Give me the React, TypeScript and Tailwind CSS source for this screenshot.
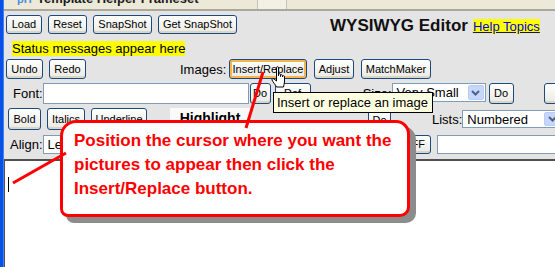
import type { ReactNode } from 'react';

// XP style push button
function XpButton({ className = '', hover = false, children }: { className?: string; hover?: boolean; children?: ReactNode }) {
  return (
    <button
      className={
        'shrink-0 whitespace-nowrap rounded-[3px] border border-[#1c4a7e] bg-linear-to-b from-white to-[#eae9e3] px-0 text-[11px] leading-none text-black ' +
        (hover ? 'shadow-[inset_0_0_0_2px_#f4b650] ' : 'shadow-[inset_0_-2px_0_#d9d5c7] ') +
        className
      }
    >
      {children}
    </button>
  );
}

function Chevron() {
  return (
    <svg width="9" height="6" viewBox="0 0 9 6">
      <path d="M1 1 L4.5 4.5 L8 1" fill="none" stroke="#4d6185" strokeWidth="2" />
    </svg>
  );
}

function XpSelect({ className = '', value }: { className?: string; value: string }) {
  return (
    <div className={'flex shrink-0 items-stretch border border-[#7f9db9] bg-white ' + className}>
      <span className="flex-1 overflow-hidden whitespace-nowrap pl-[4px] text-[13px] leading-[17px]">{value}</span>
      <span className="m-[1px] flex w-[16px] items-center justify-center rounded-[2px] border border-[#b9cdf7] bg-[#c6d6fc]">
        <Chevron />
      </span>
    </div>
  );
}

export default function App() {
  return (
    <div className="relative flex h-[267px] w-[555px] overflow-hidden bg-[#e4e4e4] font-['Liberation_Sans',Arial,sans-serif] text-black">
      {/* window frame */}
      <div className="w-[4px] shrink-0 border-r border-[#3f82f4] bg-[#0a50e4]" />

      <div className="flex min-w-0 flex-1 flex-col">
        {/* title bar, cut off at the top */}
        <div className="flex h-[11px] shrink-0 items-start overflow-hidden border-b-2 border-[#aaa89b] bg-[#ece9d8]">
          <span className="ml-[13px] -mt-[6px] w-[20px] text-[11px] font-bold leading-[11px] text-[#4a8fd8]">pH</span>
          <span className="-mt-[8px] w-[220px] whitespace-nowrap text-[13px] font-bold leading-[13px] text-[#1b1b1b]">
            Template Helper Frameset
          </span>
          <span className="h-[9px] w-[30px] border-x border-[#c7c3b0] bg-[#f3f1e6]" />
        </div>

        {/* row 1 */}
        <div className="mt-[4px] flex h-[19px] shrink-0 items-stretch">
          <XpButton className="ml-[2px] w-[36px]">Load</XpButton>
          <XpButton className="ml-[6px] w-[39px]">Reset</XpButton>
          <XpButton className="ml-[6px] w-[59px]">SnapShot</XpButton>
          <XpButton className="ml-[6px] w-[79px]">Get SnapShot</XpButton>
          <span className="ml-[93px] self-end whitespace-nowrap text-[17px] font-bold leading-[17px] text-[#111]">WYSIWYG Editor</span>
          <a className="ml-[5px] self-end whitespace-nowrap bg-[#ffff00] text-[13px] leading-[15px] text-[#0000ee] underline">
            Help Topics
          </a>
        </div>

        {/* status */}
        <div className="mt-[7px] flex h-[15px] shrink-0">
          <span className="ml-[8px] whitespace-nowrap bg-[#ffff00] text-[13px] leading-[15px]">Status messages appear here</span>
        </div>

        {/* row 3 */}
        <div className="mt-[3px] flex h-[20px] shrink-0 items-stretch">
          <XpButton className="ml-[2px] w-[37px]">Undo</XpButton>
          <XpButton className="ml-[6px] w-[37px]">Redo</XpButton>
          <span className="ml-[94px] w-[49px] self-center text-[13px] leading-[15px]">Images:</span>
          <XpButton className="w-[78px]" hover>
            Insert/Replace
          </XpButton>
          <XpButton className="ml-[7px] w-[40px]">Adjust</XpButton>
          <XpButton className="ml-[7px] w-[70px]">MatchMaker</XpButton>
        </div>

        {/* row 4 */}
        <div className="mt-[4px] flex h-[21px] shrink-0 items-stretch">
          <span className="ml-[9px] w-[32px] self-center text-[13px] leading-[15px]">Font:</span>
          <div className="w-[206px] shrink-0 border border-[#7f9db9] bg-white" />
          <XpButton className="ml-[1px] w-[21px]">Do</XpButton>
          <XpButton className="ml-[4px] w-[36px]">Def</XpButton>
          <span className="ml-[52px] w-[31px] self-center text-[13px] leading-[15px]">Size:</span>
          <XpSelect className="h-[19px] w-[94px]" value="Very Small" />
          <XpButton className="ml-[3px] w-[25px]">Do</XpButton>
          <XpButton className="ml-[30px] w-[40px]" />
        </div>

        {/* row 5 */}
        <div className="mt-[4px] flex h-[22px] shrink-0 items-stretch">
          <XpButton className="ml-[4px] w-[33px]">Bold</XpButton>
          <XpButton className="ml-[6px] w-[38px]">Italics</XpButton>
          <XpButton className="ml-[6px] w-[56px]">Underline</XpButton>
          <div className="ml-[23px] w-[80px] shrink-0 bg-[#fafafa] pt-[2px] text-center text-[14px] font-bold leading-[16px]">Highlight</div>
          <XpButton className="ml-[118px] mt-[2px] w-[23px]">Do</XpButton>
          <span className="ml-[41px] w-[34px] self-center text-[13px] leading-[15px]">Lists:</span>
          <XpSelect className="h-[18px] w-[100px] self-center" value="Numbered" />
        </div>

        {/* row 6 */}
        <div className="mt-[5px] flex h-[19px] shrink-0 items-stretch">
          <span className="ml-[6px] w-[35px] self-center text-[13px] leading-[15px]">Align:</span>
          <XpSelect className="w-[110px]" value="Left" />
          <XpButton className="ml-[245px] w-[33px]">OFF</XpButton>
          <div className="ml-[6px] w-[130px] shrink-0 border border-[#7f9db9] bg-white" />
        </div>

        {/* editing area */}
        <div className="mt-[5px] flex-1 border-l border-t-2 border-[#505050] bg-white">
          <div className="ml-[3px] mt-[16px] h-[15px] w-[1px] bg-black" />
        </div>
      </div>

      {/* tooltip */}
      <div className="absolute left-[273px] top-[92px] h-[21px] w-[160px] border border-black bg-[#ffffe1] px-[3px] text-[13px] leading-[19px] whitespace-nowrap">
        Insert or replace an image
      </div>

      {/* callout */}
      <div className="absolute left-[60px] top-[120px] h-[97px] w-[350px] rounded-tl-[16px] rounded-tr-[14px] rounded-br-[10px] rounded-bl-[8px] border-[3px] border-[#ff0000] bg-white pl-[11px] pt-[6px] text-[17px] font-bold leading-[24px] text-[#ff0000] shadow-[6px_6px_0_#8c8c8c]">
        <div>Position the cursor where you want the</div>
        <div>pictures to appear then click the</div>
        <div>Insert/Replace button.</div>
      </div>

      {/* pointer lines */}
      <svg className="pointer-events-none absolute left-0 top-0" width="555" height="267">
        <line x1="263" y1="72" x2="246" y2="128" stroke="#ff0000" strokeWidth="3" />
        <line x1="66" y1="153" x2="13" y2="183" stroke="#ff0000" strokeWidth="3" />
      </svg>

      {/* hand cursor */}
      <svg className="pointer-events-none absolute left-[271px] top-[66px]" width="18" height="25" viewBox="0 0 18 25">
        <path
          d="M5.5 1.5 C5.5 0.5 7.5 0.5 7.5 1.5 V10 V8.5 C7.5 7.5 9.5 7.5 9.5 8.5 V10.5 V9.5 C9.5 8.5 11.5 8.5 11.5 9.5 V11 V10.5 C11.5 9.5 13.5 9.5 13.5 10.5 V16 C13.5 18 12.5 19.5 12.5 21 H5.5 C5 19.5 1.5 15.5 1 14 C0.7 12.8 2 12.2 3 13 L5.5 15 Z"
          fill="white"
          stroke="black"
          strokeWidth="1"
        />
      </svg>
    </div>
  );
}
